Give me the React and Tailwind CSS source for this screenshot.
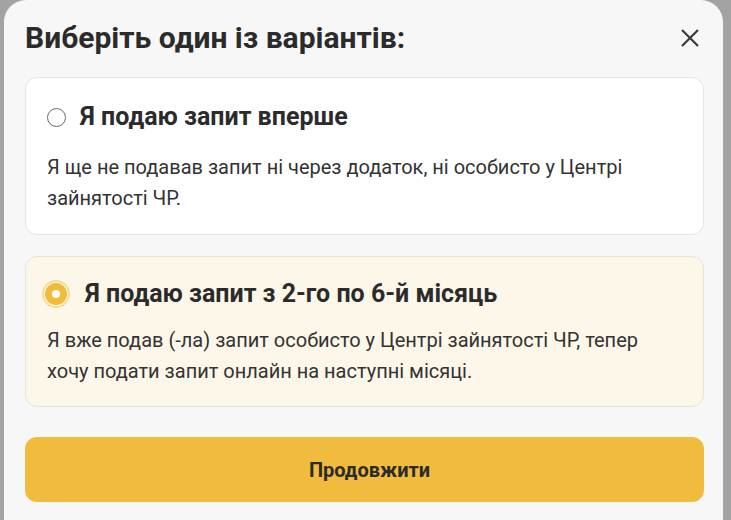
import React from "react";

export default function App() {
  return (
    <div className="w-[731px] h-[520px] bg-[#a3a3a3] overflow-hidden" style={{ fontFamily: "Roboto, 'Noto Sans', sans-serif" }}>
      <div className="ml-[4px] w-[719px] h-[520px] bg-[#f7f7f7] rounded-t-[22px] pl-[21px] pr-[19px]">
        <div className="flex items-center justify-between h-[77px] pb-[1px]">
          <h1 className="text-[30px] leading-[36px] font-bold text-[#2b2b2b]">Виберіть один із варіантів:</h1>
          <button className="w-[28px] h-[28px] flex items-center justify-center text-[#3a3a3a] mr-[0px]">
            <svg width="22" height="22" viewBox="0 0 22 22" fill="none" stroke="currentColor" strokeWidth="2.2" strokeLinecap="butt">
              <path d="M3 3L19 19M19 3L3 19" />
            </svg>
          </button>
        </div>
        <div className="bg-white border border-[#e5e5e5] rounded-[12px] h-[158px] px-[21px] pt-[24px]">
          <div className="flex items-center gap-[14px]">
            <span className="w-[19px] h-[19px] rounded-full border border-[#6b6b6b] bg-white" />
            <span className="text-[25px] leading-[30px] font-bold text-[#2b2b2b]">Я подаю запит вперше</span>
          </div>
          <p className="mt-[20px] text-[20px] leading-[31px] text-[#333]">
            Я ще не подавав запит ні через додаток, ні особисто у Центрі
            <br />
            зайнятості ЧР.
          </p>
        </div>
        <div className="mt-[21px] bg-[#fdf7ea] border border-[#e8e4dc] rounded-[12px] h-[151px] px-[16px] pt-[22px]">
          <div className="flex items-center gap-[15px]">
            <span className="w-[28px] h-[28px] rounded-full border-[2px] border-[#f7dc95] flex items-center justify-center">
              <span className="w-[22px] h-[22px] rounded-full bg-[#f1bb3d] flex items-center justify-center">
                <span className="w-[8px] h-[8px] rounded-full bg-white" />
              </span>
            </span>
            <span className="text-[25px] leading-[30px] font-bold text-[#2b2b2b]">Я подаю запит з 2-го по 6-й місяць</span>
          </div>
          <p className="mt-[16px] ml-[5px] text-[20px] leading-[31px] text-[#333]">
            Я вже подав (-ла) запит особисто у Центрі зайнятості ЧР, тепер
            <br />
            хочу подати запит онлайн на наступні місяці.
          </p>
        </div>
        <button className="mt-[30px] w-full h-[65px] rounded-[12px] bg-[#f1bb3d] pl-[10px] text-[20px] font-bold text-[#2b2b2b]">
          Продовжити
        </button>
      </div>
    </div>
  );
}
